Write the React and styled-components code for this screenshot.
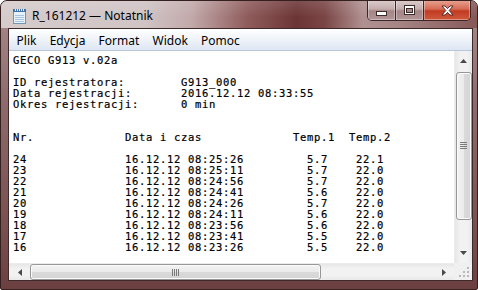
import React from "react";
import styled, { createGlobalStyle } from "styled-components";

const GlobalStyle = createGlobalStyle`
  html, body {
    margin: 0;
    padding: 0;
    background: #ffffff;
  }
`;

const Window = styled.div`
  box-sizing: border-box;
  width: 478px;
  height: 290px;
  display: flex;
  flex-direction: column;
  padding-bottom: 8px;
  border: 1px solid #33201f;
  border-radius: 7px 7px 2px 2px;
  overflow: hidden;
  background: linear-gradient(180deg, #a98c8d 0%, #8d6b6c 35%, #7a5252 75%, #6c4040 100%);
`;

const TitleBar = styled.div`
  height: 27px;
  flex: none;
  display: flex;
  align-items: center;
  padding: 2px 6px 0 11px;
  box-sizing: border-box;
  background:
    linear-gradient(180deg, rgba(255, 255, 255, 0.12) 0%, rgba(255, 255, 255, 0) 60%),
    linear-gradient(90deg, #d6cccc 0%, #d0c4c5 30%, #c2a9aa 40%, #8e5a5a 52%, #6c3535 62%, #7a4545 68%, #b09090 76%, #a58484 84%, #865858 100%);
`;

const AppIcon = styled.svg`
  flex: none;
  display: block;
`;

const Title = styled.span`
  margin-left: 5px;
  font-family: "Segoe UI", "Noto Sans", sans-serif;
  font-size: 12px;
  color: #000000;
  white-space: nowrap;
`;

const CaptionGroup = styled.div`
  margin-left: auto;
  margin-top: -3px;
  align-self: flex-start;
  display: flex;
  height: 20px;
  border: 1px solid #3c2526;
  border-top: none;
  border-radius: 0 0 5px 5px;
  overflow: hidden;
`;

const CaptionButton = styled.div`
  width: ${(p) => p.$w}px;
  display: flex;
  align-items: center;
  justify-content: center;
  border-left: ${(p) => (p.$first ? "none" : "1px solid #3c2526")};
  box-shadow: inset 0 0 0 1px rgba(255, 255, 255, 0.35);
  background: ${(p) =>
    p.$close
      ? "linear-gradient(180deg, #e8a594 0%, #d66b55 45%, #c13a22 55%, #cf5a3e 100%)"
      : "linear-gradient(180deg, #ddcdcd 0%, #c4adad 45%, #a58586 55%, #b29596 100%)"};
`;

const Client = styled.div`
  flex: 1;
  display: flex;
  flex-direction: column;
  margin: 0 4px 0 7px;
  border: 1px solid #3e2a2a;
  background: #ffffff;
  min-height: 0;
`;

const MenuBar = styled.div`
  height: 21px;
  flex: none;
  display: flex;
  align-items: center;
  padding-left: 1px;
  border-bottom: 1px solid #b7c6da;
  background: linear-gradient(180deg, #ffffff 0%, #f1f5fa 45%, #dde6f2 100%);
`;

const MenuItem = styled.span`
  padding: 1px 6.6px 0 6.6px;
  font-family: "Segoe UI", "Noto Sans", sans-serif;
  font-size: 12px;
  color: #000000;
`;

const EditArea = styled.div`
  flex: 1;
  display: grid;
  grid-template-columns: 1fr 18px;
  grid-template-rows: 1fr 17px;
  min-height: 0;
`;

const Text = styled.pre`
  margin: 0;
  padding: 4px 0 0 4px;
  overflow: hidden;
  font-family: "DejaVu Sans Mono", "Liberation Mono", monospace;
  font-size: 10.5px;
  letter-spacing: 0.68px;
  line-height: 11px;
  color: #000000;
  -webkit-text-stroke: 0.2px #000000;
  white-space: pre;
`;

const VScroll = styled.div`
  display: flex;
  flex-direction: column;
  align-items: center;
  background: linear-gradient(90deg, #e6e6e6 0%, #f2f2f2 30%, #f2f2f2 70%, #e9e9e9 100%);
  border-left: 1px solid #ececec;
`;

const HScroll = styled.div`
  display: flex;
  align-items: center;
  background: linear-gradient(180deg, #e6e6e6 0%, #f2f2f2 30%, #f2f2f2 70%, #e9e9e9 100%);
  border-top: 1px solid #ececec;
`;

const ArrowBox = styled.div`
  flex: none;
  display: flex;
  align-items: center;
  justify-content: center;
  width: ${(p) => (p.$vertical ? "100%" : "21px")};
  height: ${(p) => (p.$vertical ? "20px" : "100%")};
  margin-top: ${(p) => (p.$end && p.$vertical ? "auto" : "0")};
  margin-left: ${(p) => (p.$end && !p.$vertical ? "auto" : "0")};
`;

const Thumb = styled.div`
  box-sizing: border-box;
  flex: none;
  display: flex;
  align-items: center;
  justify-content: center;
  border: 1px solid #979797;
  border-radius: 3px;
  box-shadow: inset 0 0 0 1px #fbfbfb;
  width: ${(p) => (p.$vertical ? "16px" : p.$len + "px")};
  height: ${(p) => (p.$vertical ? p.$len + "px" : "16px")};
  margin-top: ${(p) => (p.$vertical ? "1px" : "0")};
  background: ${(p) =>
    p.$vertical
      ? "linear-gradient(90deg, #f3f3f3 0%, #eaeaea 50%, #dadada 51%, #d4d4d4 100%)"
      : "linear-gradient(180deg, #f3f3f3 0%, #eaeaea 50%, #dadada 51%, #d4d4d4 100%)"};
`;

const SizeBox = styled.div`
  display: flex;
  align-items: flex-end;
  justify-content: flex-end;
  padding: 0 2px 2px 0;
  background: #f0f0f0;
`;

const Arrow = ({ dir }) => {
  const pts = {
    up: "0,4 7,4 3.5,0",
    down: "0,0 7,0 3.5,4",
    left: "4,0 4,7 0,3.5",
    right: "0,0 0,7 4,3.5",
  }[dir];
  const vert = dir === "up" || dir === "down";
  return (
    <svg width={vert ? 7 : 4} height={vert ? 4 : 7} viewBox={vert ? "0 0 7 4" : "0 0 4 7"}>
      <polygon points={pts} fill="#4a4a4a" />
    </svg>
  );
};

const Grip = ({ vertical }) => (
  <svg width={vertical ? 7 : 8} height={vertical ? 8 : 7} viewBox={vertical ? "0 0 7 8" : "0 0 8 7"}>
    {[0, 2, 4, 6].map((o) =>
      vertical ? (
        <rect key={o} x="0" y={o} width="7" height="1" fill="#7a7a7a" />
      ) : (
        <rect key={o} x={o} y="0" width="1" height="7" fill="#7a7a7a" />
      )
    )}
  </svg>
);

const NotepadIcon = () => (
  <AppIcon width="15" height="16" viewBox="0 0 15 16">
    <rect x="1.5" y="2.5" width="12" height="13" fill="#e6f2fa" stroke="#7393b2" />
    <rect x="1" y="1" width="13" height="3" fill="#4272a8" />
    {[3, 5, 7, 9, 11].map((x) => (
      <rect key={x} x={x} y="1" width="1" height="2" fill="#e8f0f8" />
    ))}
    {[7, 9, 11, 13].map((y) => (
      <line key={y} x1="3" y1={y + 0.5} x2="12" y2={y + 0.5} stroke="#a8c3da" />
    ))}
  </AppIcon>
);

const MinGlyph = () => (
  <svg width="11" height="5" viewBox="0 0 11 5" style={{ marginTop: 7 }}>
    <rect x="0.5" y="0.5" width="10" height="4" fill="#ffffff" stroke="#3b2a2a" />
  </svg>
);

const MaxGlyph = () => (
  <svg width="11" height="10" viewBox="0 0 11 10">
    <rect x="0.5" y="0.5" width="10" height="9" fill="#ffffff" stroke="#3b2a2a" />
    <rect x="2.5" y="3.5" width="6" height="4" fill="#a98b8b" stroke="#3b2a2a" />
  </svg>
);

const CloseGlyph = () => (
  <svg width="13" height="11" viewBox="0 0 13 11">
    <path
      d="M1 1 L4 1 L6.5 3.6 L9 1 L12 1 L8.2 5.5 L12 10 L9 10 L6.5 7.4 L4 10 L1 10 L4.8 5.5 Z"
      fill="#ffffff"
      stroke="#4a2020"
      strokeWidth="0.9"
      strokeLinejoin="round"
    />
  </svg>
);

const SizeGrip = () => (
  <svg width="12" height="12" viewBox="0 0 12 12">
    {[
      [9, 1],
      [9, 5],
      [5, 5],
      [9, 9],
      [5, 9],
      [1, 9],
    ].map(([x, y]) => (
      <rect key={`${x}-${y}`} x={x} y={y} width="2" height="2" fill="#b8b8b8" />
    ))}
  </svg>
);

const meta = [
  ["ID rejestratora:", "G913_000"],
  ["Data rejestracji:", "2016.12.12 08:33:55"],
  ["Okres rejestracji:", "0 min"],
];

const rows = [
  ["24", "08:25:26", "5.7", "22.1"],
  ["23", "08:25:11", "5.7", "22.0"],
  ["22", "08:24:56", "5.7", "22.0"],
  ["21", "08:24:41", "5.6", "22.0"],
  ["20", "08:24:26", "5.7", "22.0"],
  ["19", "08:24:11", "5.6", "22.0"],
  ["18", "08:23:56", "5.6", "22.0"],
  ["17", "08:23:41", "5.5", "22.0"],
  ["16", "08:23:26", "5.5", "22.0"],
];

const content = [
  "GECO G913 v.02a",
  "",
  ...meta.map(([k, v]) => k.padEnd(24) + v),
  "",
  "",
  "Nr.".padEnd(16) + "Data i czas".padEnd(24) + "Temp.1".padEnd(8) + "Temp.2",
  "",
  ...rows.map(
    ([nr, time, t1, t2]) =>
      nr.padEnd(16) + ("16.12.12 " + time).padEnd(26) + t1.padEnd(7) + t2
  ),
].join("\n");

const menu = ["Plik", "Edycja", "Format", "Widok", "Pomoc"];

export default function App() {
  return (
    <>
      <GlobalStyle />
      <Window>
        <TitleBar>
          <NotepadIcon />
          <Title>R_161212 — Notatnik</Title>
          <CaptionGroup>
            <CaptionButton $w={27} $first>
              <MinGlyph />
            </CaptionButton>
            <CaptionButton $w={27}>
              <MaxGlyph />
            </CaptionButton>
            <CaptionButton $w={46} $close>
              <CloseGlyph />
            </CaptionButton>
          </CaptionGroup>
        </TitleBar>
        <Client>
          <MenuBar>
            {menu.map((m) => (
              <MenuItem key={m}>{m}</MenuItem>
            ))}
          </MenuBar>
          <EditArea>
            <Text>{content}</Text>
            <VScroll>
              <ArrowBox $vertical>
                <Arrow dir="up" />
              </ArrowBox>
              <Thumb $vertical $len={148}>
                <Grip vertical />
              </Thumb>
              <ArrowBox $vertical $end>
                <Arrow dir="down" />
              </ArrowBox>
            </VScroll>
            <HScroll>
              <ArrowBox>
                <Arrow dir="left" />
              </ArrowBox>
              <Thumb $len={291}>
                <Grip />
              </Thumb>
              <ArrowBox $end>
                <Arrow dir="right" />
              </ArrowBox>
            </HScroll>
            <SizeBox>
              <SizeGrip />
            </SizeBox>
          </EditArea>
        </Client>
      </Window>
    </>
  );
}
